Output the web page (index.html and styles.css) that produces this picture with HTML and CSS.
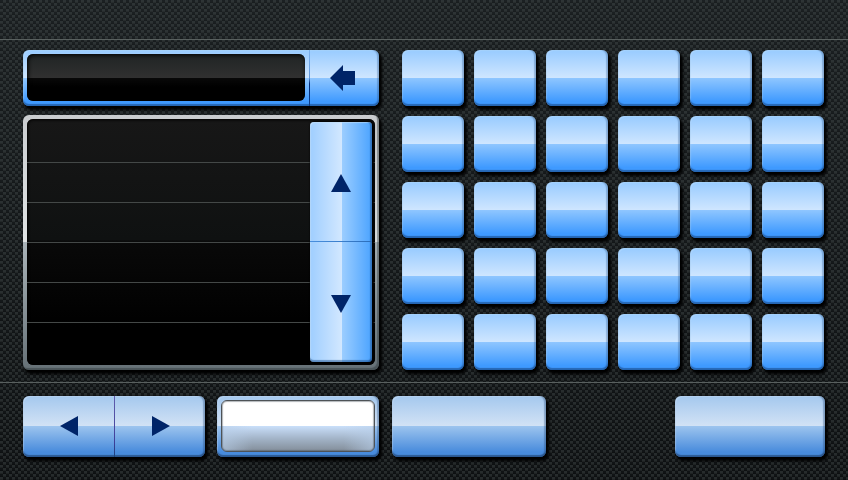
FILE: index.html
```html
<!DOCTYPE html>
<html lang="en">
<head>
<meta charset="utf-8">
<meta name="viewport" content="width=device-width, initial-scale=1">
<title>Keypad</title>
<link rel="stylesheet" href="styles.css">
</head>
<body>
<header class="topbar"></header>
<main class="main">
  <section class="left">
    <form class="entry">
      <div class="entry-field"><input type="text" aria-label="Entry"></div>
      <button type="button" class="entry-back" aria-label="Delete"><svg width="26" height="26" viewBox="0 0 26 26"><path d="M0 13 13 0V6H25V20H13V26Z"/></svg></button>
    </form>
    <div class="panel">
      <ul class="list"><li></li><li></li><li></li><li></li><li></li><li></li></ul>
      <div class="scroll">
        <button type="button" aria-label="Scroll up"><svg width="20" height="18" viewBox="0 0 20 18"><path d="M10 0 20 18H0Z"/></svg></button>
        <button type="button" aria-label="Scroll down"><svg width="20" height="18" viewBox="0 0 20 18"><path d="M0 0H20L10 18Z"/></svg></button>
      </div>
    </div>
  </section>
  <section class="keys" aria-label="Keys">
    <button type="button" class="key" aria-label="Key 1"></button>
    <button type="button" class="key" aria-label="Key 2"></button>
    <button type="button" class="key" aria-label="Key 3"></button>
    <button type="button" class="key" aria-label="Key 4"></button>
    <button type="button" class="key" aria-label="Key 5"></button>
    <button type="button" class="key" aria-label="Key 6"></button>
    <button type="button" class="key" aria-label="Key 7"></button>
    <button type="button" class="key" aria-label="Key 8"></button>
    <button type="button" class="key" aria-label="Key 9"></button>
    <button type="button" class="key" aria-label="Key 10"></button>
    <button type="button" class="key" aria-label="Key 11"></button>
    <button type="button" class="key" aria-label="Key 12"></button>
    <button type="button" class="key" aria-label="Key 13"></button>
    <button type="button" class="key" aria-label="Key 14"></button>
    <button type="button" class="key" aria-label="Key 15"></button>
    <button type="button" class="key" aria-label="Key 16"></button>
    <button type="button" class="key" aria-label="Key 17"></button>
    <button type="button" class="key" aria-label="Key 18"></button>
    <button type="button" class="key" aria-label="Key 19"></button>
    <button type="button" class="key" aria-label="Key 20"></button>
    <button type="button" class="key" aria-label="Key 21"></button>
    <button type="button" class="key" aria-label="Key 22"></button>
    <button type="button" class="key" aria-label="Key 23"></button>
    <button type="button" class="key" aria-label="Key 24"></button>
    <button type="button" class="key" aria-label="Key 25"></button>
    <button type="button" class="key" aria-label="Key 26"></button>
    <button type="button" class="key" aria-label="Key 27"></button>
    <button type="button" class="key" aria-label="Key 28"></button>
    <button type="button" class="key" aria-label="Key 29"></button>
    <button type="button" class="key" aria-label="Key 30"></button>
  </section>
</main>
<footer class="bottombar">
  <div class="soft pager">
    <button type="button" aria-label="Previous"><svg width="18" height="20" viewBox="0 0 18 20"><path d="M0 10 18 0V20Z"/></svg></button>
    <button type="button" aria-label="Next"><svg width="18" height="20" viewBox="0 0 18 20"><path d="M0 0 18 10 0 20Z"/></svg></button>
  </div>
  <button type="button" class="soft mode" aria-label="Mode"><span class="mode-face"></span></button>
  <button type="button" class="soft option" aria-label="Option"></button>
  <button type="button" class="soft confirm" aria-label="Confirm"></button>
</footer>
</body>
</html>
```
FILE: styles.css
```css
* {
  box-sizing: border-box;
}

body {
  margin: 0;
  min-height: 100vh;
  display: flex;
  flex-direction: column;
  font-family: "Liberation Sans", sans-serif;
  background:
    linear-gradient(rgba(42, 48, 50, 0.35), rgba(0, 0, 0, 0.2)),
    repeating-linear-gradient(rgba(0, 0, 0, 0) 0 2px, rgba(0, 0, 0, 0.2) 2px 3px),
    repeating-conic-gradient(#303637 0 25%, #14181a 0 50%) 0 0 / 6px 6px;
}

button {
  appearance: none;
  border: 0;
  margin: 0;
  padding: 0;
  background: none;
  cursor: pointer;
}

svg {
  display: block;
  fill: #002468;
}

.topbar {
  height: 40px;
  border-bottom: 1px solid #59605f;
}

.main {
  flex: 1;
  display: grid;
  grid-template-columns: 356fr 422fr;
  gap: 23px;
  padding: 10px 24px 12px 23px;
}

.left {
  display: grid;
  grid-template-rows: 56px 1fr;
  gap: 9px;
}

.entry,
.key {
  border-radius: 6px;
  background: linear-gradient(#98cbff, #cfe6ff 50%, #8fc6ff 50%, #3f9aff 92%);
  box-shadow:
    inset 0 -2px 1px rgba(30, 85, 155, 0.75),
    inset -2px 0 1px rgba(40, 80, 130, 0.3),
    inset 1px 1px 1px rgba(210, 235, 255, 0.3),
    2px 3px 3px 1px #000;
}

.entry {
  display: grid;
  grid-template-columns: 1fr 70px;
}

.entry-field {
  padding: 4px 4px 5px;
}

.entry-field input {
  display: block;
  width: 100%;
  height: 100%;
  padding: 0 12px;
  border: 0;
  border-radius: 6px;
  color: #fff;
  font: 20px "Liberation Sans", sans-serif;
  background: linear-gradient(#202424, #303030 50%, #090909 50%, #000 70%);
  box-shadow: inset 1px 1px 4px #000;
}

.entry-back {
  display: grid;
  place-items: center;
  padding-right: 3px;
  border-left: 1px solid;
  border-image: linear-gradient(#7db2ed, #5f95d8 50%, #002a78 60%, #0d3f8c) 1;
}

.panel {
  display: grid;
  grid-template-columns: 1fr 62px;
  padding: 4px 4px 5px;
  border-radius: 6px;
  background: linear-gradient(#c9cccf, #dfe3e4 50%, #a9b3b8 50%, #667177);
  box-shadow:
    inset -2px -2px 1px rgba(40, 48, 52, 0.45),
    2px 3px 3px 1px #000;
}

.list {
  grid-area: 1 / 1 / 2 / 3;
  display: grid;
  grid-template-rows: 44px repeat(4, 40px) 1fr;
  margin: 0;
  padding: 0;
  list-style: none;
  border-radius: 6px;
  background: linear-gradient(#171717, #0f1111 49%, #090909 50%, #000 85%);
  box-shadow: inset 0 0 3px 1px #000;
}

.list li {
  border-bottom: 1px solid #444847;
}

.list li:last-child {
  border: 0;
}

.scroll {
  grid-area: 1 / 2 / 2 / 3;
  position: relative;
  display: grid;
  grid-template-rows: 1fr 1fr;
  margin: 3px 3px 3px -3px;
  border-radius: 4px;
  background: linear-gradient(90deg, #9fceff, #d3e8ff 52%, #9bcdff 52%, #4ba3ff);
  box-shadow:
    inset 0 -2px 1px rgba(30, 80, 140, 0.5),
    inset -2px 0 1px rgba(30, 80, 140, 0.5),
    inset 1px 1px 1px rgba(210, 235, 255, 0.6),
    1px 0 2px 1px #000;
}

.scroll button {
  display: grid;
  place-items: center;
}

.scroll button:first-child {
  padding-top: 2px;
  border-bottom: 1px solid;
  border-image: linear-gradient(90deg, #4a90df, #2b6db9) 1;
}

.scroll button:last-child {
  padding-top: 3px;
}

.keys {
  display: grid;
  grid-template-columns: repeat(6, 1fr);
  grid-auto-rows: 1fr;
  gap: 10px;
}

.bottombar {
  height: 98px;
  display: flex;
  padding: 13px 23px 23px;
  border-top: 1px solid #59605f;
}

.soft {
  border-radius: 6px;
  background: linear-gradient(#a4c8ee, #d2e2f5 49%, #9bc3ee 50%, #488bdc 92%);
  box-shadow:
    inset 0 -2px 1px rgba(36, 76, 128, 0.8),
    inset -2px 0 1px rgba(40, 75, 120, 0.35),
    inset 1px 1px 1px rgba(220, 238, 255, 0.4),
    2px 3px 3px 1px #000;
}

.pager {
  flex: 0 1 182px;
  display: grid;
  grid-template-columns: 1fr 1fr;
  margin-right: 12px;
}

.pager button {
  display: grid;
  place-items: center;
  padding-bottom: 2px;
}

.pager button:last-child {
  padding-left: 2px;
  border-left: 1px solid;
  border-image: linear-gradient(#625fae, #3d3d99 75%, #174477) 1;
}

.mode {
  flex: 0 1 162px;
  display: flex;
  margin-right: 13px;
  padding: 4px 4px 5px;
}

.mode-face {
  flex: 1;
  border: 1px solid #4e5256;
  border-radius: 6px;
  background:
    linear-gradient(#fff 50%, rgba(255, 255, 255, 0) 50%),
    linear-gradient(90deg, rgba(185, 208, 235, 0.6), rgba(185, 208, 235, 0) 20% 80%, rgba(185, 208, 235, 0.6)),
    linear-gradient(#fff 50%, #c9dffa 50%, #a3b4c8 75%, #838e9a);
  box-shadow: inset 0 0 1px 1px rgba(60, 70, 80, 0.4);
}

.option {
  flex: 0 1 154px;
}

.confirm {
  flex: 0 1 150px;
  margin-left: auto;
}
```
